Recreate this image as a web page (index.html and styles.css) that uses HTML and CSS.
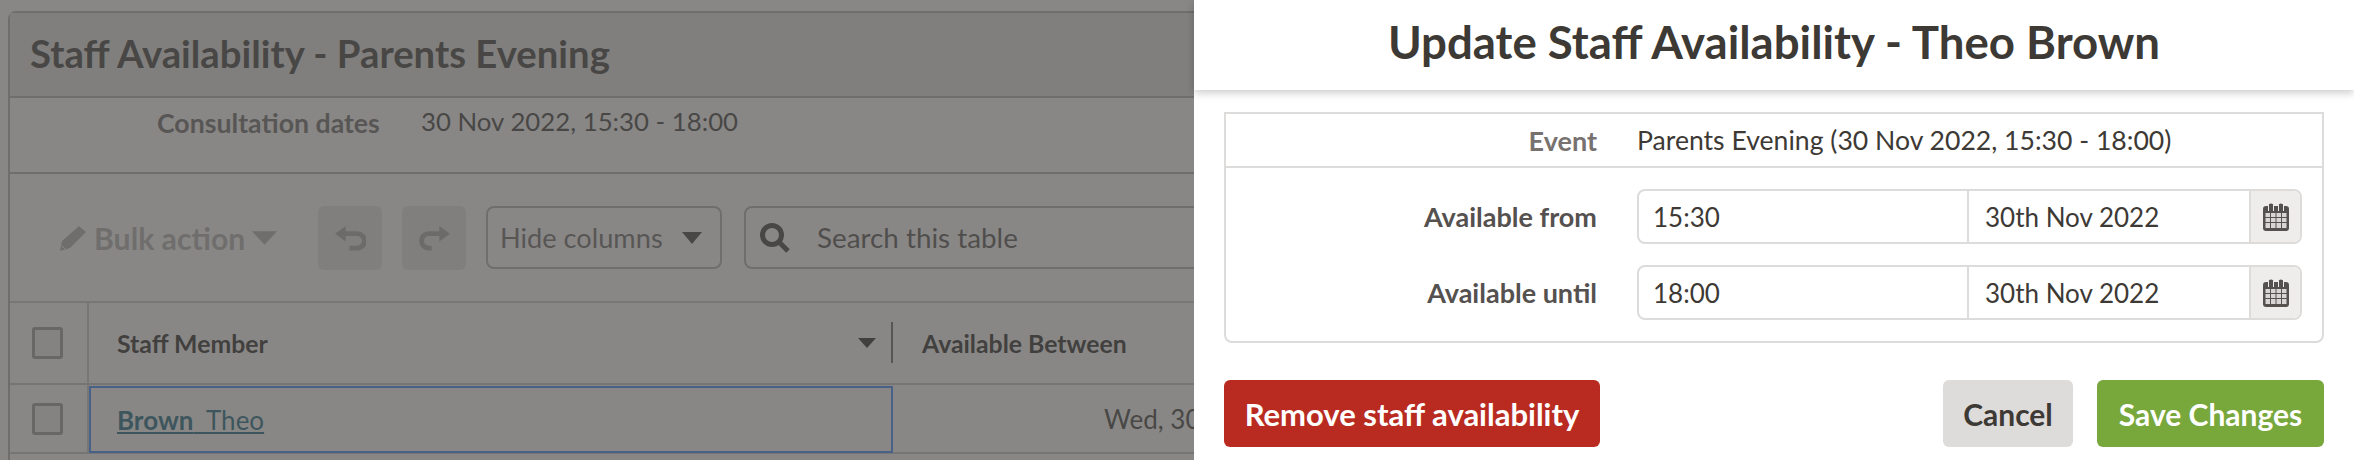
FILE: index.html
```html
<!DOCTYPE html>
<html lang="en">
<head>
    <meta charset="UTF-8">
    <meta name="viewport" content="width=device-width, initial-scale=1.0">
    <title>Staff Availability</title>
    <link rel="stylesheet" href="styles.css">
</head>
<body>
    <div class="card">
        <div class="card-head">
            <h1>Staff Availability - Parents Evening</h1>
        </div>
        <div class="meta">
            <span class="meta-label">Consultation dates</span>
            <span class="meta-value">30 Nov 2022, 15:30 - 18:00</span>
        </div>
        <div class="toolbar">
            <div class="bulk">
                <svg class="pencil" viewBox="0 0 26 25"><path d="M19 0l7 6L10 22l-10 3 2-10z"/><path class="pencil-tip" d="M2 20l3 3"/></svg>
                <span>Bulk action</span>
                <svg class="bulk-caret" viewBox="0 0 26 14"><path d="M0 0h26L13 14z"/></svg>
            </div>
            <div class="tool-btn">
                <svg viewBox="0 0 32 26"><path class="arrow-head" d="M0 8L11 0v16z"/><path class="arrow-line" d="M9 8h14a6.500 6.500 0 0 1 0 15h-8"/></svg>
            </div>
            <div class="tool-btn">
                <svg viewBox="0 0 32 26"><path class="arrow-head" d="M32 8L21 0v16z"/><path class="arrow-line" d="M23 8H10a6.500 6.500 0 0 0 0 15h3"/></svg>
            </div>
            <div class="select">
                <span>Hide columns</span>
                <svg class="select-caret" viewBox="0 0 20 12"><path d="M0 0h20L10 12z"/></svg>
            </div>
            <div class="search">
                <svg class="glass" viewBox="0 0 30 30"><circle cx="12" cy="12" r="9.500"/><path d="M19 19l9 9"/></svg>
                <span>Search this table</span>
            </div>
        </div>
        <div class="table-row table-head">
            <div class="check-cell"><span class="check"></span></div>
            <div class="name-cell">
                <span>Staff Member</span>
                <svg class="sort-caret" viewBox="0 0 18 10"><path d="M0 0h18L9 10z"/></svg>
            </div>
            <div class="time-cell">Available Between</div>
        </div>
        <div class="table-row table-body">
            <div class="check-cell"><span class="check"></span></div>
            <div class="name-cell selected">
                <a href="#"><b>Brown</b>&nbsp; Theo</a>
            </div>
            <div class="time-cell right">Wed, 30</div>
        </div>
    </div>

    <div class="backdrop"></div>

    <div class="panel">
        <div class="panel-head">
            <h2>Update Staff Availability - Theo Brown</h2>
        </div>
        <div class="panel-body">
            <div class="form-box">
                <div class="form-row event-row">
                    <span class="form-label muted">Event</span>
                    <span class="form-value">Parents Evening (30 Nov 2022, 15:30 - 18:00)</span>
                </div>
                <div class="form-fields">
                    <div class="form-row">
                        <span class="form-label">Available from</span>
                        <div class="input-group">
                            <div class="field time">15:30</div>
                            <div class="field date">30th Nov 2022</div>
                            <div class="addon">
                                <svg class="cal" viewBox="0 0 26 28"><use href="#cal-icon"/></svg>
                            </div>
                        </div>
                    </div>
                    <div class="form-row">
                        <span class="form-label">Available until</span>
                        <div class="input-group">
                            <div class="field time">18:00</div>
                            <div class="field date">30th Nov 2022</div>
                            <div class="addon">
                                <svg class="cal" viewBox="0 0 26 28"><use href="#cal-icon"/></svg>
                            </div>
                        </div>
                    </div>
                </div>
            </div>
            <div class="actions">
                <button class="btn btn-red">Remove staff availability</button>
                <button class="btn btn-grey">Cancel</button>
                <button class="btn btn-green">Save Changes</button>
            </div>
        </div>
    </div>

    <svg class="defs" width="0" height="0">
        <symbol id="cal-icon" viewBox="0 0 26 28">
            <path fill="#55514f" d="M3 3h2.500a2.500 2.500 0 0 1 5 0h5a2.500 2.500 0 0 1 5 0H23a3 3 0 0 1 3 3v19a3 3 0 0 1-3 3H3a3 3 0 0 1-3-3V6a3 3 0 0 1 3-3z"/>
            <path fill="none" stroke="#eeedec" stroke-width="1" d="M5.500 2v6M10.500 2v6M15.500 2v6M20.500 2v6"/>
            <path fill="#55514f" d="M6.500 1.500h3v5h-3zM16.500 1.500h3v5h-3z"/>
            <path fill="#d8d6d4" d="M2.500 10h4.500v4H2.500zM8 10h4.500v4H8zM13.500 10H18v4h-4.500zM19 10h4.500v4H19zM2.500 15h4.500v4H2.500zM8 15h4.500v4H8zM13.500 15H18v4h-4.500zM19 15h4.500v4H19zM2.500 20h4.500v5H2.500zM8 20h4.500v5H8zM13.500 20H18v5h-4.500zM19 20h4.500v5H19z"/>
        </symbol>
    </svg>
</body>
</html>
```

FILE: styles.css
```css
* {
    margin: 0;
    padding: 0;
    box-sizing: border-box;
    font-family: "Lato", "Open Sans", sans-serif;
}

html, body {
    height: 460px;
    overflow: hidden;
}

body {
    background-color: white;
    padding: 11px 8px 0;
    color: #3f3d3b;
}

/* page behind the slide-in panel */
.card {
    width: 2338px;
    height: 460px;
    border: 2px solid #b4b3b2;
    border-radius: 8px 8px 0 0;
}

.card-head {
    height: 85px;
    padding: 0 0 3px 20px;
    display: flex;
    align-items: center;
    background-color: #e6e6e4;
    border-bottom: 2px solid #b4b3b2;
}

h1 {
    font-size: 38.300px;
    font-weight: 700;
}

.meta {
    height: 76px;
    display: flex;
    padding-top: 8px;
    border-bottom: 2px solid #b4b3b2;
    font-size: 25.800px;
}

.meta-label {
    margin: 1px 0 0 147px;
    width: 264px;
    font-size: 26.700px;
    font-weight: 700;
    color: #6e6c6a;
}

.toolbar {
    height: 129px;
    padding-top: 32px;
    display: flex;
    align-items: flex-start;
    border-bottom: 2px solid #d0cfce;
}

.bulk {
    width: 308px;
    height: 64px;
    display: flex;
    align-items: center;
    padding-left: 50px;
    font-size: 30.200px;
    font-weight: 700;
    color: #b4b3b2;
}

.pencil {
    width: 26px;
    height: 25px;
    margin-right: 8px;
    fill: #b4b3b2;
}

.pencil-tip {
    fill: none;
    stroke: #ffffff;
    stroke-width: 1;
}

.bulk-caret {
    width: 25px;
    height: 14px;
    margin-left: 7px;
    fill: #b4b3b2;
}

.tool-btn {
    width: 64px;
    height: 64px;
    margin-right: 20px;
    border-radius: 6px;
    background-color: #e6e6e4;
    display: flex;
    align-items: center;
    justify-content: center;
}

.tool-btn svg {
    width: 31px;
    height: 25px;
}

.arrow-head {
    fill: #aaa9a8;
}

.arrow-line {
    fill: none;
    stroke: #aaa9a8;
    stroke-width: 5;
}

.select {
    width: 236px;
    height: 63px;
    border: 2px solid #b4b3b2;
    border-radius: 8px;
    display: flex;
    align-items: center;
    justify-content: space-between;
    padding: 0 18px 0 12px;
    font-size: 27.200px;
    color: #6e6c6a;
}

.select-caret {
    width: 20px;
    height: 12px;
    fill: #3f3d3b;
}

.search {
    width: 900px;
    height: 63px;
    margin-left: 22px;
    border: 2px solid #b4b3b2;
    border-radius: 8px;
    display: flex;
    align-items: center;
    padding-left: 14px;
    font-size: 27.800px;
    color: #55534f;
}

.glass {
    width: 30px;
    height: 30px;
    margin-right: 27px;
    fill: none;
    stroke: #3f3d3b;
    stroke-width: 5;
}

.table-row {
    display: flex;
    font-size: 24.800px;
}

.table-head {
    height: 82px;
    font-weight: 700;
    color: #2b2a28;
    border-bottom: 2px solid #c8c7c6;
}

.table-body {
    height: 69px;
    border-bottom: 2px solid #c8c7c6;
}

.check-cell {
    width: 79px;
    display: flex;
    align-items: center;
    padding-left: 22px;
    border-right: 2px solid #d0cfce;
}

.check {
    width: 31px;
    height: 32px;
    border: 3px solid #a09f9e;
    border-radius: 3px;
    background-color: #f4f3f2;
}

.name-cell {
    width: 804px;
    display: flex;
    align-items: center;
    justify-content: space-between;
    padding: 0 17px 0 28px;
    position: relative;
}

.table-head .name-cell::after {
    content: "";
    position: absolute;
    right: 0;
    top: 19px;
    bottom: 20px;
    border-right: 2px solid #6e6c6a;
}

.sort-caret {
    width: 18px;
    height: 10px;
    fill: #2b2a28;
}

.selected {
    border: 2px solid #3a90ff;
    height: 67px;
    margin-top: 1px;
    padding-left: 26px;
}

.selected a {
    color: #1d6b82;
    font-size: 26px;
    text-decoration: underline;
}

.time-cell {
    padding-left: 29px;
    display: flex;
    align-items: center;
    white-space: nowrap;
}

.time-cell.right {
    padding-left: 211px;
    font-size: 26px;
}

/* dim layer and panel sit over the page */
.backdrop {
    position: absolute;
    top: 0;
    left: 0;
    right: 0;
    bottom: 0;
    background-color: rgba(77, 76, 74, 0.67);
}

.panel {
    position: absolute;
    top: 0;
    right: 0;
    bottom: 0;
    width: 1160px;
    background-color: white;
}

.panel-head {
    height: 90px;
    padding-bottom: 8px;
    display: flex;
    align-items: center;
    justify-content: center;
    box-shadow: 0 3px 8px rgba(0, 0, 0, 0.2);
}

h2 {
    font-size: 45.600px;
    font-weight: 700;
    color: #3d3935;
}

.panel-body {
    padding: 22px 30px 0 30px;
}

.form-box {
    border: 2px solid #dddcdb;
    border-radius: 0 0 8px 8px;
    height: 231px;
}

.form-row {
    display: grid;
    grid-template-columns: 371px 1fr;
    column-gap: 40px;
    align-items: center;
    padding-right: 20px;
}

.event-row {
    height: 54px;
    border-bottom: 2px solid #dddcdb;
}

.form-fields {
    padding-top: 21px;
    display: flex;
    flex-direction: column;
    gap: 21px;
}

.form-label {
    text-align: right;
    font-size: 27px;
    font-weight: 700;
    color: #55514f;
}

.form-label.muted {
    color: #777270;
}

.form-value {
    font-size: 26.600px;
    color: #3d3935;
}

.input-group {
    height: 55px;
    display: flex;
    border: 2px solid #dddcdb;
    border-radius: 8px;
    overflow: hidden;
}

.field {
    display: flex;
    align-items: center;
    font-size: 26px;
    color: #3d3935;
}

.time {
    width: 330px;
    padding-left: 14px;
    border-right: 2px solid #dddcdb;
}

.date {
    width: 282px;
    padding-left: 16px;
    border-right: 2px solid #dddcdb;
}

.addon {
    flex: 1;
    display: flex;
    align-items: center;
    justify-content: center;
    background-color: #eeedec;
}

.cal {
    width: 26px;
    height: 28px;
}

.actions {
    margin-top: 37px;
    display: flex;
    gap: 24px;
}

.btn {
    height: 67px;
    border: none;
    border-radius: 6px;
    font-size: 30px;
    font-weight: 700;
    color: white;
}

.btn-red {
    width: 376px;
    font-size: 31px;
    background-color: #b92b20;
    margin-right: auto;
}

.btn-grey {
    width: 130px;
    background-color: #dddcdb;
    color: #3d3935;
}

.btn-green {
    width: 227px;
    background-color: #78a73c;
}

.defs {
    position: absolute;
}
```
